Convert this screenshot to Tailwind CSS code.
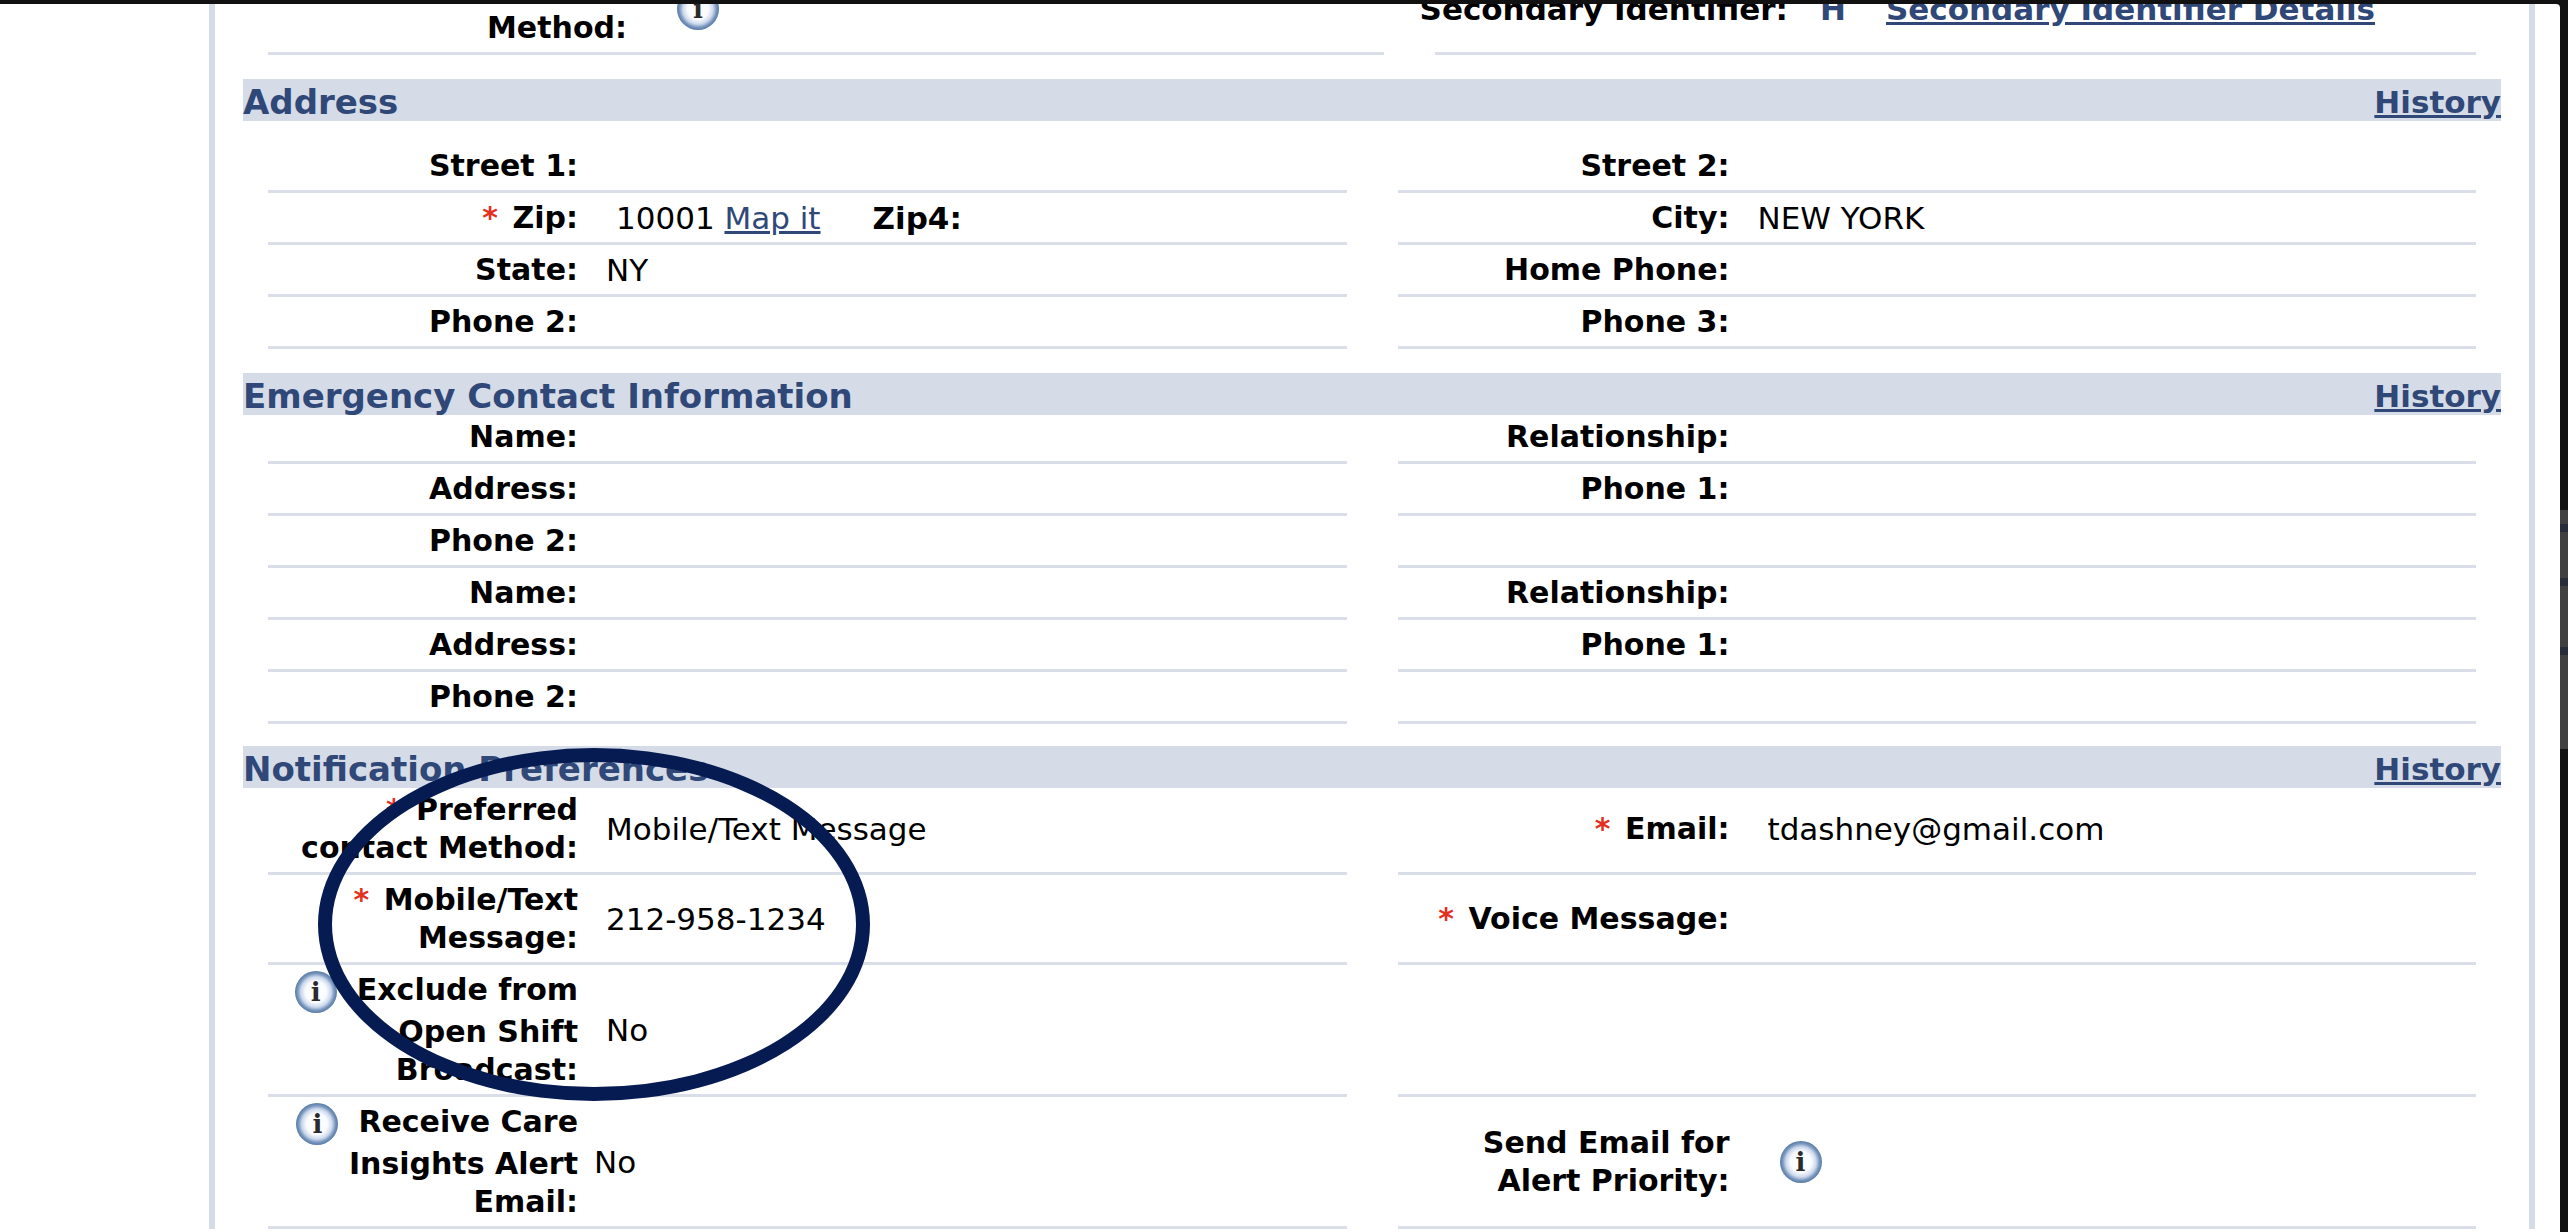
<!DOCTYPE html>
<html lang="en">
<head>
  <meta charset="UTF-8" />
  <meta name="viewport" content="width=device-width, initial-scale=1.0"/>
  <title>Caregiver Profile</title>
  <script src="https://cdn.jsdelivr.net/npm/@tailwindcss/browser@4"></script>
</head>
<body class="bg-[#111111] text-black font-['DejaVu_Sans',sans-serif] text-[31px] leading-[38px] h-screen overflow-hidden pt-1 flex">

  <div class="flex-1 bg-white rounded-tr-sm overflow-hidden pl-[209px] pr-[25px]">
    <main class="relative min-h-full border-x-[6px] border-[#d5dbe7] px-7">

      <!-- contact method / secondary identifier -->
      <div class="-mt-[39px] px-[25px] grid grid-cols-[1115fr_1040fr] gap-[51px]">
        <div class="flex min-h-[90px] pt-[6px] pb-[5px] border-b-[3px] border-[#dadee8]">
          <div class="w-[359px] text-right text-[30px] font-bold self-end">Method:</div>
          <button class="ml-[50px] self-center size-[42px] shrink-0 rounded-full bg-[radial-gradient(circle_closest-side,#ffffff_0%,#fafbff_50%,#ccd8ec_72%,#7795bd_88%,#587ba6_100%)] font-['DejaVu_Serif',serif] text-[26px] font-bold text-[#2b2b2b] text-center" aria-label="Method info">i</button>
        </div>
        <div class="flex items-center font-bold pt-[6px] pb-[5px] border-b-[3px] border-[#dadee8]">
          <div class="w-[353px] flex justify-end whitespace-nowrap">Secondary Identifier:</div>
          <div class="ml-8 text-[#2f4878]">H</div>
          <a href="#" class="ml-10 text-[#2f4878] underline">Secondary Identifier Details</a>
        </div>
      </div>

      <!-- address -->
      <section class="mt-6">
        <div class="h-[42px] pt-1 bg-[#d5dbe7] text-[#2f4878] font-bold flex items-center justify-between">
          <h2 class="text-[34px]">Address</h2>
          <a href="#" class="underline">History</a>
        </div>
        <div class="pt-5 px-[25px] grid grid-cols-2 gap-x-[51px] *:min-h-[52px] *:flex *:items-center *:pt-[6px] *:pb-[5px] *:border-b-[3px] *:border-[#dadee8]">
          <div><div class="w-[310px] text-right text-[30px] font-bold">Street 1:</div></div>
          <div><div class="w-[332px] text-right text-[30px] font-bold">Street 2:</div></div>

          <div>
            <div class="w-[310px] text-right text-[30px] font-bold"><span class="mr-1 text-[#e3301f]">*</span> Zip:</div>
            <div class="ml-[38px]">10001 <a href="#" class="text-[#2f4878] underline">Map it</a></div>
            <div class="ml-[52px] font-bold">Zip4:</div>
          </div>
          <div>
            <div class="w-[332px] text-right text-[30px] font-bold">City:</div>
            <div class="ml-7">NEW YORK</div>
          </div>

          <div>
            <div class="w-[310px] text-right text-[30px] font-bold">State:</div>
            <div class="ml-7">NY</div>
          </div>
          <div><div class="w-[332px] text-right text-[30px] font-bold">Home Phone:</div></div>

          <div><div class="w-[310px] text-right text-[30px] font-bold">Phone 2:</div></div>
          <div><div class="w-[332px] text-right text-[30px] font-bold">Phone 3:</div></div>
        </div>
      </section>

      <!-- emergency contacts -->
      <section class="mt-6">
        <div class="h-[42px] pt-1 bg-[#d5dbe7] text-[#2f4878] font-bold flex items-center justify-between">
          <h2 class="text-[34px]">Emergency Contact Information</h2>
          <a href="#" class="underline">History</a>
        </div>
        <div class="-mt-[3px] px-[25px] grid grid-cols-2 gap-x-[51px] *:min-h-[52px] *:flex *:items-center *:pt-[6px] *:pb-[5px] *:border-b-[3px] *:border-[#dadee8]">
          <div><div class="w-[310px] text-right text-[30px] font-bold">Name:</div></div>
          <div><div class="w-[332px] text-right text-[30px] font-bold">Relationship:</div></div>
          <div><div class="w-[310px] text-right text-[30px] font-bold">Address:</div></div>
          <div><div class="w-[332px] text-right text-[30px] font-bold">Phone 1:</div></div>
          <div><div class="w-[310px] text-right text-[30px] font-bold">Phone 2:</div></div>
          <div></div>
          <div><div class="w-[310px] text-right text-[30px] font-bold">Name:</div></div>
          <div><div class="w-[332px] text-right text-[30px] font-bold">Relationship:</div></div>
          <div><div class="w-[310px] text-right text-[30px] font-bold">Address:</div></div>
          <div><div class="w-[332px] text-right text-[30px] font-bold">Phone 1:</div></div>
          <div><div class="w-[310px] text-right text-[30px] font-bold">Phone 2:</div></div>
          <div></div>
        </div>
      </section>

      <!-- notification preferences -->
      <section class="relative mt-[22px]">
        <div class="h-[42px] pt-1 bg-[#d5dbe7] text-[#2f4878] font-bold flex items-center justify-between">
          <h2 class="text-[34px]">Notification Preferences</h2>
          <a href="#" class="underline">History</a>
        </div>
        <div class="-mt-[3px] px-[25px] grid grid-cols-2 gap-x-[51px] *:min-h-[52px] *:flex *:items-center *:pt-[6px] *:pb-[5px] *:border-b-[3px] *:border-[#dadee8]">
          <div>
            <div class="w-[310px] text-right text-[30px] font-bold"><span class="mr-1 text-[#e3301f]">*</span> Preferred<br>contact Method:</div>
            <div class="ml-7">Mobile/Text Message</div>
          </div>
          <div>
            <div class="w-[332px] text-right text-[30px] font-bold"><span class="mr-1 text-[#e3301f]">*</span> Email:</div>
            <div class="ml-[38px]">tdashney@gmail.com</div>
          </div>

          <div>
            <div class="w-[310px] text-right text-[30px] font-bold"><span class="mr-1 text-[#e3301f]">*</span> Mobile/Text<br>Message:</div>
            <div class="ml-7">212-958-1234</div>
          </div>
          <div><div class="w-[332px] text-right text-[30px] font-bold whitespace-nowrap"><span class="mr-1 text-[#e3301f]">*</span> Voice Message:</div></div>

          <div>
            <div class="w-[310px] text-right text-[30px] font-bold">
              <div class="flex items-start justify-end gap-5 whitespace-nowrap">
                <button class="size-[42px] shrink-0 rounded-full bg-[radial-gradient(circle_closest-side,#ffffff_0%,#fafbff_50%,#ccd8ec_72%,#7795bd_88%,#587ba6_100%)] font-['DejaVu_Serif',serif] text-[26px] font-bold text-[#2b2b2b] text-center" aria-label="Open shift broadcast info">i</button>
                Exclude from
              </div>
              Open Shift<br>Broadcast:
            </div>
            <div class="ml-7">No</div>
          </div>
          <div></div>

          <div>
            <div class="w-[310px] text-right text-[30px] font-bold">
              <div class="flex items-start justify-end gap-5 whitespace-nowrap">
                <button class="size-[42px] shrink-0 rounded-full bg-[radial-gradient(circle_closest-side,#ffffff_0%,#fafbff_50%,#ccd8ec_72%,#7795bd_88%,#587ba6_100%)] font-['DejaVu_Serif',serif] text-[26px] font-bold text-[#2b2b2b] text-center" aria-label="Care insights info">i</button>
                Receive Care
              </div>
              Insights Alert<br>Email:
            </div>
            <div class="ml-4">No</div>
          </div>
          <div>
            <div class="w-[332px] text-right text-[30px] font-bold">Send Email for<br>Alert Priority:</div>
            <button class="ml-[50px] size-[42px] shrink-0 rounded-full bg-[radial-gradient(circle_closest-side,#ffffff_0%,#fafbff_50%,#ccd8ec_72%,#7795bd_88%,#587ba6_100%)] font-['DejaVu_Serif',serif] text-[26px] font-bold text-[#2b2b2b] text-center" aria-label="Alert priority info">i</button>
          </div>
        </div>

        <!-- highlight ring over the mobile number -->
        <div class="absolute left-[75px] top-[2px] w-[552px] h-[353px] rounded-[50%] border-[14px] border-[#071b53] pointer-events-none"></div>
      </section>
    </main>
  </div>

  <!-- edge of the dimmed panel behind -->
  <div class="w-2">
    <div class="mt-[506px] h-[239px] bg-[#404040] flex flex-col">
      <div class="mt-[14px] h-2 bg-[#282c38]"></div>
      <div class="mt-[46px] h-2 bg-[#282c38]"></div>
      <div class="mt-[61px] h-2 bg-[#282c38]"></div>
    </div>
  </div>
</body>
</html>
